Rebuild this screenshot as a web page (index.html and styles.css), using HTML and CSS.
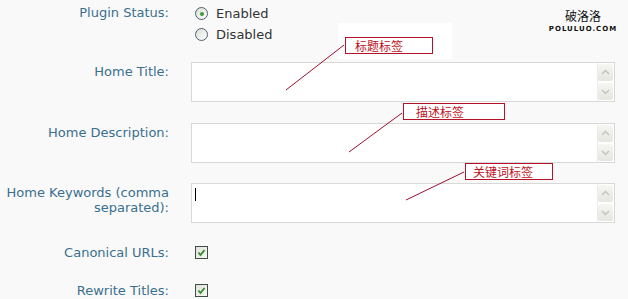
FILE: index.html
```html
<!DOCTYPE html>
<html>
<head>
<meta charset="utf-8">
<link rel="stylesheet" href="styles.css">
</head>
<body>
    <div class="page">
        <div class="options">
            <div class="row row-status">
                <div class="label">Plugin Status:</div>
                <div class="choices">
                    <div class="choice"><span class="radio on"></span>Enabled</div>
                    <div class="choice"><span class="radio"></span>Disabled</div>
                </div>
            </div>
            <div class="row row-text row-first">
                <div class="label">Home Title:</div>
                <div class="field">
                    <div class="value"></div>
                    <div class="scroll">
                        <span class="btn"><svg width="15" height="17"><polyline points="4,10 7.5,6.5 11,10" /></svg></span>
                        <span class="btn"><svg width="15" height="17"><polyline points="4,7 7.5,10.5 11,7" /></svg></span>
                    </div>
                </div>
            </div>
            <div class="row row-text">
                <div class="label">Home Description:</div>
                <div class="field">
                    <div class="value"></div>
                    <div class="scroll">
                        <span class="btn"><svg width="15" height="17"><polyline points="4,10 7.5,6.5 11,10" /></svg></span>
                        <span class="btn"><svg width="15" height="17"><polyline points="4,7 7.5,10.5 11,7" /></svg></span>
                    </div>
                </div>
            </div>
            <div class="row row-text">
                <div class="label">Home Keywords (comma<br>separated):</div>
                <div class="field">
                    <div class="value"><span class="caret"></span></div>
                    <div class="scroll">
                        <span class="btn"><svg width="15" height="17"><polyline points="4,10 7.5,6.5 11,10" /></svg></span>
                        <span class="btn"><svg width="15" height="17"><polyline points="4,7 7.5,10.5 11,7" /></svg></span>
                    </div>
                </div>
            </div>
            <div class="row row-check row-canonical">
                <div class="label">Canonical URLs:</div>
                <span class="check"><svg width="11" height="11"><polyline points="2.5,5.5 4.5,8 8.5,3" /></svg></span>
            </div>
            <div class="row row-check row-rewrite">
                <div class="label">Rewrite Titles:</div>
                <span class="check"><svg width="11" height="11"><polyline points="2.5,5.5 4.5,8 8.5,3" /></svg></span>
            </div>
        </div>

        <div class="patch"></div>
        <svg class="leaders" width="628" height="299">
            <line x1="286" y1="90" x2="344" y2="45" />
            <line x1="349" y1="152" x2="402" y2="113" />
            <line x1="406" y1="200" x2="464" y2="172" />
        </svg>
        <div class="note note-title">标题标签</div>
        <div class="note note-desc">描述标签</div>
        <div class="note note-keys">关键词标签</div>

        <div class="logo">
            <div class="logo-cn">破洛洛</div>
            <div class="logo-en">POLULUO.COM</div>
        </div>
    </div>
</body>
</html>
```

FILE: styles.css
```css
body {
    margin: 0;
    background-color: #f9f9f9;
    font-family: "DejaVu Sans", Verdana, sans-serif;
    font-size: 13px;
}
.page {
    position: relative;
    width: 628px;
    height: 299px;
    overflow: hidden;
}
.options {
    display: flex;
    flex-direction: column;
}
.row {
    display: flex;
    column-gap: 22px;
}
.label {
    width: 169px;
    flex: none;
    text-align: right;
    color: #3a6f8f;
    line-height: 15px;
    padding-top: 2px;
}
.row-status {
    padding-top: 3px;
}
.row-status > .label {
    line-height: 20px;
    padding-top: 0;
}
.choices {
    display: flex;
    flex-direction: column;
}
.choice {
    display: flex;
    align-items: center;
    height: 21px;
    color: #333;
}
.radio {
    width: 11px;
    height: 11px;
    margin: 0 8px 0 4px;
    border: 1px solid #4d6172;
    border-radius: 50%;
    background: linear-gradient(135deg, #dcdcd6, #ffffff);
    display: flex;
    align-items: center;
    justify-content: center;
}
.radio.on::after {
    content: "";
    width: 4px;
    height: 4px;
    border-radius: 50%;
    background-color: #3c9a3c;
}
.row-first {
    margin-top: 17px;
}
.row-text + .row-text {
    margin-top: 21px;
}
.row-text + .row-text + .row-text {
    margin-top: 20px;
}
.field {
    width: 422px;
    height: 38px;
    border: 1px solid #d8d8d8;
    background-color: #fff;
    display: flex;
}
.value {
    flex: 1;
    padding: 4px 3px;
}
.caret {
    display: block;
    width: 1px;
    height: 13px;
    background-color: #000;
}
.scroll {
    width: 16px;
    border-left: 1px solid #ececec;
    display: flex;
    flex-direction: column;
    justify-content: space-between;
    padding: 1px 0;
}
.btn {
    display: block;
    width: 15px;
    height: 17px;
    background: linear-gradient(#f6f6f2, #e6e6e0);
    border-radius: 2px;
}
.btn svg {
    display: block;
    fill: none;
    stroke: #c4c4be;
    stroke-width: 1.5;
}
.row-check {
    align-items: center;
    height: 20px;
}
.row-check > .label {
    padding-top: 0;
}
.row-canonical {
    margin-top: 19px;
}
.row-rewrite {
    margin-top: 18px;
}
.check {
    width: 11px;
    height: 11px;
    margin-left: 4px;
    border: 1px solid #3f4e48;
    background: linear-gradient(135deg, #e2e2dc, #f8f8f4);
}
.check svg {
    display: block;
    fill: none;
    stroke: #3f8a3f;
    stroke-width: 2;
}

/* annotations laid over the form */
.patch {
    position: absolute;
    left: 338px;
    top: 23px;
    width: 114px;
    height: 36px;
    background-color: #fff;
}
.leaders {
    position: absolute;
    left: 0;
    top: 0;
}
.leaders line {
    stroke: #9a1030;
    stroke-width: 1;
}
.note {
    position: absolute;
    height: 17px;
    box-sizing: border-box;
    border: 1px solid #b5122a;
    background-color: #fff;
    color: #c0101c;
    font-family: "Noto Sans CJK SC", sans-serif;
    font-size: 12px;
    line-height: 15px;
}
.note-title {
    left: 345px;
    top: 37px;
    width: 88px;
    padding-left: 9px;
}
.note-desc {
    left: 403px;
    top: 103px;
    width: 102px;
    padding-left: 12px;
}
.note-keys {
    left: 465px;
    top: 163px;
    width: 88px;
    padding-left: 7px;
}
.logo {
    position: absolute;
    left: 546px;
    top: 8px;
    width: 74px;
    text-align: center;
    color: #111;
}
.logo-cn {
    font-family: "Noto Sans CJK SC", sans-serif;
    font-size: 12px;
    line-height: 16px;
}
.logo-en {
    font-family: "DejaVu Sans", sans-serif;
    font-size: 7px;
    font-weight: bold;
    letter-spacing: 1px;
    line-height: 9px;
    margin-top: 1px;
}
```
